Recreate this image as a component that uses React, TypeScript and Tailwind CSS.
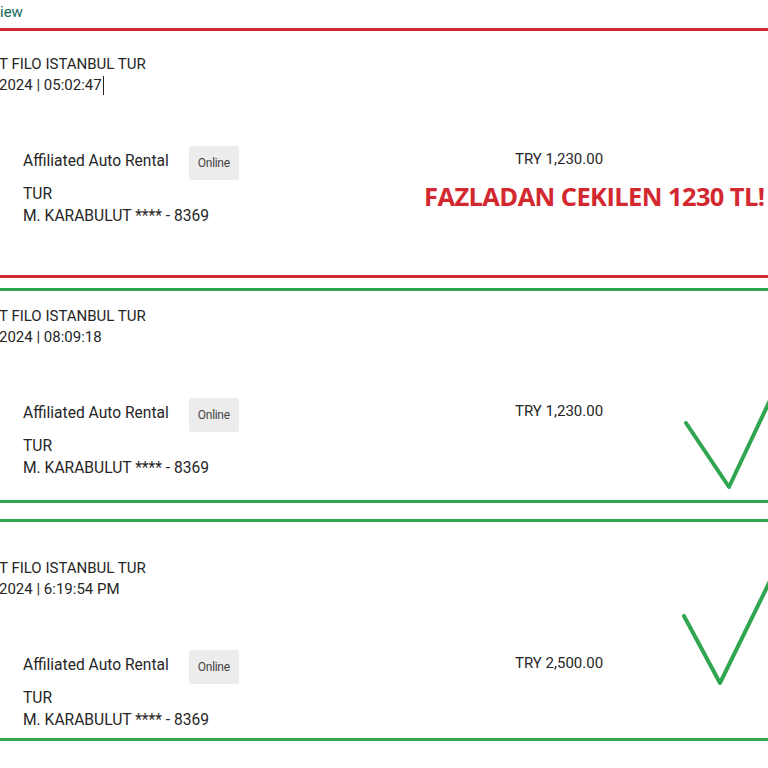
import React from 'react'

type Txn = {
  date: string
  amount: string
  tone: 'red' | 'green'
  gap: string
  pt: string
  pb: string
  cursor?: boolean
  note?: string
  check?: string
}

const txns: Txn[] = [
  { date: '2024 | 05:02:47', amount: 'TRY 1,230.00', tone: 'red', gap: 'mt-0', pt: 'pt-[23px]', pb: 'pb-[48px]', cursor: true, note: 'FAZLADAN CEKILEN 1230 TL!' },
  { date: '2024 | 08:09:18', amount: 'TRY 1,230.00', tone: 'green', gap: 'mt-[10px]', pt: 'pt-[15px]', pb: 'pb-[21px]', check: 'M686 135 L729 199 L772 108' },
  { date: '2024 | 6:19:54 PM', amount: 'TRY 2,500.00', tone: 'green', gap: 'mt-[16px]', pt: 'pt-[36px]', pb: 'pb-[7px]', check: 'M684 97 L720 164 L772 58' },
]

function TxnCard({ t }: { t: Txn }) {
  return (
    <div
      className={
        'relative border-y-[3px] ' +
        (t.tone === 'red' ? 'border-[#d3282f]' : 'border-[#2fa64f]') +
        ' ' + t.gap + ' ' + t.pt + ' ' + t.pb
      }
    >
      {/* merchant + date */}
      <div className="ml-[-1px] text-[15px] leading-[21px] text-[#262626]">
        <div>T FILO ISTANBUL TUR</div>
        <div className="flex items-center">
          {t.date}
          {t.cursor && <span className="ml-px inline-block h-[19px] w-px bg-[#222]" />}
        </div>
      </div>

      {/* details */}
      <div className="mt-[50px] flex items-start pl-[23px]">
        <div className="flex w-[492px] items-start gap-[20px]">
          <span className="mt-[5px] text-[15.6px] leading-[21px] text-[#262626]">Affiliated Auto Rental</span>
          <span className="flex h-[34px] items-center rounded-[3px] bg-[#ececec] px-[9px] text-[12px] tracking-[-0.3px] text-[#444]">
            Online
          </span>
        </div>
        <span className="mt-[3px] text-[15px] leading-[21px] text-[#262626]">{t.amount}</span>
      </div>

      <div className="mt-[3px] flex items-start pl-[23px]">
        <div className="w-[401px] shrink-0 text-[15.6px] leading-[22px] text-[#262626]">
          <div>TUR</div>
          <div>M. KARABULUT **** - 8369</div>
        </div>
        {t.note && (
          <span className="mt-[-3px] whitespace-nowrap font-['Open_Sans',sans-serif] text-[25.5px] font-bold leading-[32px] tracking-[-0.6px] text-[#d3282f]">
            {t.note}
          </span>
        )}
      </div>

      {t.check && (
        <svg className="pointer-events-none absolute left-0 top-[-3px]" width="768" height="240" viewBox="0 0 768 240">
          <path d={t.check} fill="none" stroke="#2fa64f" strokeWidth="4" strokeLinecap="round" strokeLinejoin="round" />
        </svg>
      )}
    </div>
  )
}

export default function App() {
  return (
    <div className="h-[768px] w-[768px] overflow-hidden bg-white font-['Roboto',sans-serif]">
      <div className="pt-[2px] text-[15px] leading-[21px] text-[#136b5a]">iew</div>
      <div className="mt-[5px]">
        {txns.map((t) => (
          <TxnCard key={t.date} t={t} />
        ))}
      </div>
    </div>
  )
}
